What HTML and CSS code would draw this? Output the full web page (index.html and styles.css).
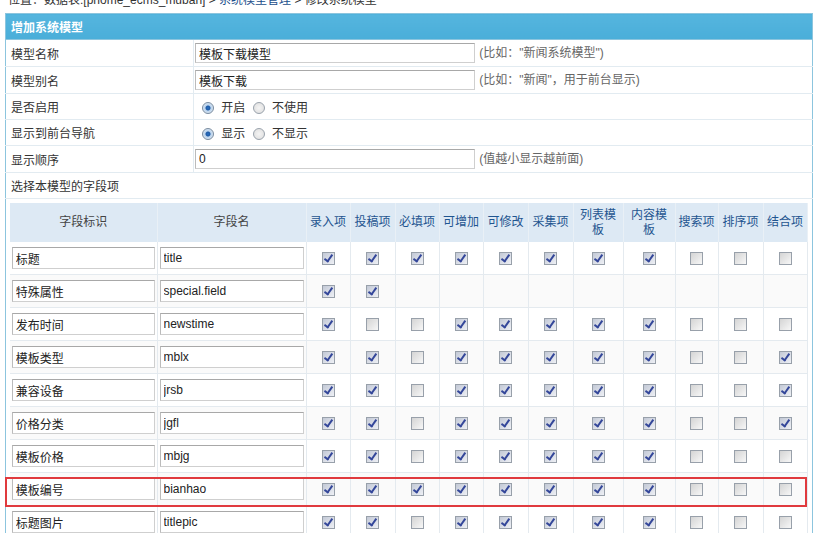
FILE: index.html
```html
<!DOCTYPE html>
<html lang="zh-CN">
<head>
    <meta charset="UTF-8">
    <title>修改系统模型</title>
    <link rel="stylesheet" href="styles.css">
</head>
<body>
    <div class="page">
        <div class="crumb">位置：数据表:[phome_ecms_muban] &gt; <a href="#">系统模型管理</a> &gt; 修改系统模型</div>

        <table class="form-table">
            <tr class="head"><td colspan="2">增加系统模型</td></tr>
            <tr>
                <td class="label">模型名称</td>
                <td><input class="txt" type="text" value="模板下载模型"> <span class="hint">(比如："新闻系统模型")</span></td>
            </tr>
            <tr>
                <td class="label">模型别名</td>
                <td><input class="txt" type="text" value="模板下载"> <span class="hint">(比如："新闻"，用于前台显示)</span></td>
            </tr>
            <tr class="short">
                <td class="label">是否启用</td>
                <td class="radios">
                    <label><input class="rd" type="radio" name="open" checked> 开启</label>
                    <label><input class="rd" type="radio" name="open"> 不使用</label>
                </td>
            </tr>
            <tr class="short">
                <td class="label">显示到前台导航</td>
                <td class="radios">
                    <label><input class="rd" type="radio" name="nav" checked> 显示</label>
                    <label><input class="rd" type="radio" name="nav"> 不显示</label>
                </td>
            </tr>
            <tr>
                <td class="label">显示顺序</td>
                <td><input class="txt" type="text" value="0"> <span class="hint">(值越小显示越前面)</span></td>
            </tr>
            <tr class="plain"><td colspan="2" class="label">选择本模型的字段项</td></tr>
            <tr>
                <td colspan="2" class="fields-cell">
                    <table class="fields">
                        <colgroup>
                            <col style="width:147px"><col style="width:149px">
                            <col style="width:44px"><col style="width:45px"><col style="width:44px">
                            <col style="width:44px"><col style="width:45px"><col style="width:45px">
                            <col style="width:50px"><col style="width:52px"><col style="width:43px">
                            <col style="width:45px"><col style="width:44px">
                        </colgroup>
                        <thead>
                            <tr>
                                <th class="name">字段标识</th>
                                <th class="name">字段名</th>
                                <th>录入项</th><th>投稿项</th><th>必填项</th><th>可增加</th>
                                <th>可修改</th><th>采集项</th><th>列表模<br>板</th><th>内容模<br>板</th>
                                <th>搜索项</th><th>排序项</th><th>结合项</th>
                            </tr>
                        </thead>
                        <tbody id="field-rows"></tbody>
                    </table>
                </td>
            </tr>
        </table>

        <div class="mark"></div>
    </div>

    <script>
        // 1 = checked, 0 = unchecked, - = no box
        const fields = [
            ['标题', 'title', '11111111000'],
            ['特殊属性', 'special.field', '11---------'],
            ['发布时间', 'newstime', '10011111000'],
            ['模板类型', 'mblx', '11011111001'],
            ['兼容设备', 'jrsb', '11011111001'],
            ['价格分类', 'jgfl', '11011111001'],
            ['模板价格', 'mbjg', '11011111000'],
            ['模板编号', 'bianhao', '11111111000'],
            ['标题图片', 'titlepic', '11011111000']
        ];

        const body = document.getElementById('field-rows');
        fields.forEach((f, i) => {
            const tr = document.createElement('tr');
            if (i % 2 === 1) tr.className = 'alt';
            let html = '<td><input class="txt wide" type="text" value="' + f[0] + '"></td>' +
                       '<td><input class="txt wide" type="text" value="' + f[1] + '"></td>';
            for (const c of f[2]) {
                if (c === '-') html += '<td></td>';
                else html += '<td><input class="cb" type="checkbox"' + (c === '1' ? ' checked' : '') + '></td>';
            }
            tr.innerHTML = html;
            body.appendChild(tr);
        });
    </script>
</body>
</html>
```

FILE: styles.css
```css
body {
    margin: 0;
    background-color: #fff;
    color: #333;
    font-family: "Liberation Sans", "Noto Sans CJK SC", sans-serif;
    font-size: 12px;
}

.page {
    position: relative;
    padding-left: 5px;
    overflow: hidden;
    height: 533px;
}

.crumb {
    margin-top: -10px;
    height: 20px;
    line-height: 20px;
    padding-left: 3px;
    color: #333;
}

.crumb a {
    color: #1c4f8c;
    text-decoration: none;
}

.form-table {
    margin-top: 3px;
    width: 807px;
    border-collapse: collapse;
    border: 1px solid #8cc5de;
}

.form-table td {
    border-bottom: 1px solid #e2ebf1;
    height: 26px;
    padding: 0;
    vertical-align: middle;
}

.form-table .short td {
    height: 25px;
}

.form-table .head td {
    background: linear-gradient(#55b5de, #4aaed9);
    color: #fff;
    font-weight: bold;
    padding-left: 5px;
    height: 25px;
    border-bottom: 1px solid #8cc5de;
}

.form-table td.label {
    width: 182px;
    padding-left: 5px;
    border-right: 1px solid #e2ebf1;
}

.form-table .plain td.label {
    border-right: none;
    height: 25px;
}

.txt {
    width: 272px;
    height: 18px;
    padding: 0 3px;
    margin: 0 0 0 1px;
    border: 1px solid #cfcfcf;
    border-top-color: #a8a8a8;
    border-left-color: #bbb;
    font-family: "Liberation Sans", "Noto Sans CJK SC", sans-serif;
    font-size: 12px;
    color: #222;
    vertical-align: middle;
}

.hint {
    color: #666;
    margin-left: 1px;
}

.radios label {
    margin-left: 8px;
    margin-right: 2px;
}

.radios label + label {
    margin-left: 2px;
}

.rd {
    appearance: none;
    -webkit-appearance: none;
    width: 12px;
    height: 12px;
    margin: 0 4px 0 0;
    border: 1px solid #9aa3ad;
    border-radius: 50%;
    background: radial-gradient(circle, #f4f4f4 0, #dcdcdc 100%);
    vertical-align: -2px;
    position: relative;
}

.rd:checked {
    background: radial-gradient(circle, #2a6fc0 0, #1d5aa6 28%, #b9d2ec 42%, #eef3f8 100%);
    border-color: #7a8c9f;
}

.fields-cell {
    padding: 4px 4px 0 4px !important;
    border-bottom: none !important;
}

.fields {
    width: 797px;
    table-layout: fixed;
    border-collapse: collapse;
}

.fields th {
    background-color: #dde9f4;
    color: #1f5590;
    font-weight: normal;
    height: 39px;
    padding: 0;
    line-height: 15px;
    text-align: center;
    border-right: 1px solid #e9f0f6;
}

.fields th.name {
    color: #444;
}

.fields td {
    height: 32px;
    padding: 0;
    text-align: center;
    border-bottom: 1px solid #e4eaef;
    border-right: 1px solid #e4eaef;
}

.fields tr.alt td {
    background-color: #fafafa;
}

.fields .txt.wide {
    width: 135px;
    height: 20px;
    margin: 0;
    padding: 0 3px;
}

.fields td:nth-child(2) .txt.wide {
    width: 136px;
}

.cb {
    appearance: none;
    -webkit-appearance: none;
    width: 13px;
    height: 13px;
    margin: 0;
    border: 1px solid #98a0aa;
    background: linear-gradient(135deg, #d4d4d4, #f7f7f7);
    vertical-align: middle;
    position: relative;
}

.cb:checked {
    background: linear-gradient(135deg, #c3c9d6, #eef0f5);
}

.cb:checked::after {
    content: '';
    position: absolute;
    left: 3px;
    top: 0;
    width: 3px;
    height: 7px;
    border: solid #34479a;
    border-width: 0 2px 2px 0;
    transform: rotate(35deg);
}

.mark {
    position: absolute;
    left: 5px;
    top: 477px;
    width: 798px;
    height: 26px;
    border: 2px solid #e03a3e;
}
```
